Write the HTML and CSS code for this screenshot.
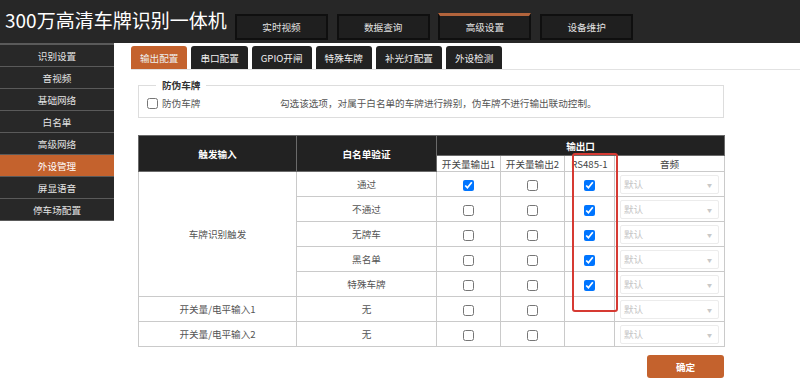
FILE: index.html
```html
<!DOCTYPE html>
<html lang="zh">
<head>
<meta charset="utf-8">
<title>300万高清车牌识别一体机</title>
<link rel="stylesheet" href="styles.css">
</head>
<body>
<header class="topbar">
  <div class="title">300万高清车牌识别一体机</div>
  <nav class="mainnav">
    <div class="navtab">实时视频</div>
    <div class="navtab">数据查询</div>
    <div class="navtab active">高级设置</div>
    <div class="navtab">设备维护</div>
  </nav>
</header>
<div class="layout">
  <aside class="sidebar">
    <div class="side-item">识别设置</div>
    <div class="side-item">音视频</div>
    <div class="side-item">基础网络</div>
    <div class="side-item">白名单</div>
    <div class="side-item">高级网络</div>
    <div class="side-item active">外设管理</div>
    <div class="side-item">屏显语音</div>
    <div class="side-item">停车场配置</div>
  </aside>
  <main class="main">
    <div class="subtabs">
      <div class="subtab active">输出配置</div>
      <div class="subtab">串口配置</div>
      <div class="subtab">GPIO开闸</div>
      <div class="subtab">特殊车牌</div>
      <div class="subtab">补光灯配置</div>
      <div class="subtab">外设检测</div>
    </div>
    <div class="panel">
      <fieldset class="guard">
        <legend>防伪车牌</legend>
        <div class="guard-row">
          <input type="checkbox" class="cb">
          <span class="lbl">防伪车牌</span>
          <span class="desc">勾选该选项，对属于白名单的车牌进行辨别，伪车牌不进行输出联动控制。</span>
        </div>
      </fieldset>
      <div class="tablewrap">
        <table class="grid">
          <colgroup>
            <col class="c-trig"><col class="c-white"><col class="c-out"><col class="c-out"><col class="c-rs"><col class="c-audio">
          </colgroup>
          <thead>
            <tr class="h1">
              <th class="dark" rowspan="2">触发输入</th>
              <th class="dark" rowspan="2">白名单验证</th>
              <th class="dark" colspan="4">输出口</th>
            </tr>
            <tr class="h2">
              <th>开关量输出1</th>
              <th>开关量输出2</th>
              <th>RS485-1</th>
              <th>音频</th>
            </tr>
          </thead>
          <tbody>
            <tr>
              <td rowspan="5">车牌识别触发</td>
              <td>通过</td>
              <td><input type="checkbox" class="cb" checked></td>
              <td><input type="checkbox" class="cb"></td>
              <td><input type="checkbox" class="cb" checked></td>
              <td><div class="sel"><span>默认</span><span class="arr">▼</span></div></td>
            </tr>
            <tr>
              <td>不通过</td>
              <td><input type="checkbox" class="cb"></td>
              <td><input type="checkbox" class="cb"></td>
              <td><input type="checkbox" class="cb" checked></td>
              <td><div class="sel"><span>默认</span><span class="arr">▼</span></div></td>
            </tr>
            <tr>
              <td>无牌车</td>
              <td><input type="checkbox" class="cb"></td>
              <td><input type="checkbox" class="cb"></td>
              <td><input type="checkbox" class="cb" checked></td>
              <td><div class="sel"><span>默认</span><span class="arr">▼</span></div></td>
            </tr>
            <tr>
              <td>黑名单</td>
              <td><input type="checkbox" class="cb"></td>
              <td><input type="checkbox" class="cb"></td>
              <td><input type="checkbox" class="cb" checked></td>
              <td><div class="sel"><span>默认</span><span class="arr">▼</span></div></td>
            </tr>
            <tr>
              <td>特殊车牌</td>
              <td><input type="checkbox" class="cb"></td>
              <td><input type="checkbox" class="cb"></td>
              <td><input type="checkbox" class="cb" checked></td>
              <td><div class="sel"><span>默认</span><span class="arr">▼</span></div></td>
            </tr>
            <tr>
              <td>开关量/电平输入1</td>
              <td>无</td>
              <td><input type="checkbox" class="cb"></td>
              <td><input type="checkbox" class="cb"></td>
              <td></td>
              <td><div class="sel"><span>默认</span><span class="arr">▼</span></div></td>
            </tr>
            <tr>
              <td>开关量/电平输入2</td>
              <td>无</td>
              <td><input type="checkbox" class="cb"></td>
              <td><input type="checkbox" class="cb"></td>
              <td></td>
              <td><div class="sel"><span>默认</span><span class="arr">▼</span></div></td>
            </tr>
          </tbody>
        </table>
        <div class="mark"></div>
      </div>
      <div class="actions">
        <button class="btn" type="button">确定</button>
      </div>
    </div>
  </main>
</div>
</body>
</html>
```

FILE: styles.css
```css
html, body {
  margin: 0;
  background: #fff;
}
body {
  font-family: "Noto Sans CJK SC", "Noto Sans", sans-serif;
  font-size: 9.6px;
  color: #444;
}

.topbar {
  display: flex;
  height: 43px;
  background: #272727;
}
.title {
  box-sizing: border-box;
  width: 235px;
  padding-left: 5px;
  font-size: 19px;
  line-height: 39px;
  color: #fff;
  white-space: nowrap;
}
.mainnav {
  display: flex;
  gap: 8.7px;
  padding-top: 14px;
}
.navtab {
  box-sizing: border-box;
  width: 93px;
  height: 26px;
  border: 2px solid #0f0f0f;
  background: #1f1f1f;
  color: #e2e2e2;
  display: flex;
  align-items: center;
  justify-content: center;
}
.navtab.active {
  border-top: 3px solid #b2643c;
  margin-top: -1px;
  height: 27px;
}

.layout {
  display: flex;
  align-items: flex-start;
}
.sidebar {
  width: 114px;
  flex: 0 0 114px;
  background: #282828;
  border-top: 2px solid #5a5a5a;
}
.side-item {
  height: 21px;
  border-bottom: 1px solid #5a5a5a;
  color: #e4e4e4;
  display: flex;
  align-items: center;
  justify-content: center;
}
.side-item.active {
  background: #c4622d;
  color: #fff;
}

.main {
  flex: 1;
  padding: 3px 0 0 17px;
}
.subtabs {
  display: flex;
  gap: 4px;
  border-bottom: 1px solid #e2e2e2;
}
.subtab {
  height: 23px;
  padding: 0 9px;
  background: #222;
  color: #eee;
  display: flex;
  align-items: center;
  border-radius: 3px 3px 0 0;
}
.subtab.active {
  background: #c4622d;
}

.panel {
  width: 586px;
  margin-left: 7px;
}
.guard {
  margin: 8px 0 0;
  padding: 4px 8px 7px;
  border: 1px solid #ddd;
  min-width: 0;
}
.guard legend {
  margin-left: 9px;
  padding: 0 6px;
  line-height: 14px;
  font-weight: bold;
  color: #333;
}
.guard-row {
  display: flex;
  align-items: center;
  line-height: 14px;
}
.cb {
  width: 11px;
  height: 11px;
  margin: 0;
  vertical-align: middle;
}
.guard-row .cb {
  margin-right: 4px;
}
.lbl {
  width: 118px;
  color: #555;
}
.desc {
  color: #555;
}

.tablewrap {
  position: relative;
  margin-top: 17px;
}
.grid {
  width: 586px;
  border-collapse: collapse;
  table-layout: fixed;
  text-align: center;
}
.c-trig { width: 158px; }
.c-white { width: 140px; }
.c-out { width: 64px; }
.c-rs { width: 50px; }
.c-audio { width: 110px; }
.grid th,
.grid td {
  border: 1px solid #cacaca;
  padding: 0;
  vertical-align: middle;
}
.grid .h1 th {
  height: 19px;
}
.grid th.dark {
  background: #222;
  color: #fff;
  font-weight: bold;
  border-color: #6a6a6a;
}
.grid .h2 th {
  height: 15px;
  background: #fff;
  color: #444;
  font-weight: normal;
  white-space: nowrap;
}
.grid tbody td {
  height: 24px;
  color: #555;
}
.sel {
  box-sizing: border-box;
  height: 19px;
  margin: 0 5px;
  padding: 0 6px 0 3px;
  border: 1px solid #ececec;
  border-radius: 2px;
  display: flex;
  align-items: center;
  justify-content: space-between;
  color: #c4c4c4;
}
.sel .arr {
  font-size: 5px;
  color: #c8c8c8;
}
.mark {
  position: absolute;
  left: 434px;
  top: 18px;
  width: 46px;
  height: 159px;
  box-sizing: border-box;
  border: 2px solid #d63a33;
  border-radius: 3px;
  pointer-events: none;
}

.actions {
  display: flex;
  justify-content: flex-end;
  margin-top: 8px;
}
.btn {
  width: 77px;
  height: 23px;
  border: 0;
  border-radius: 3px;
  background: #c4622d;
  color: #fff;
  font-family: "Noto Sans CJK SC", "Noto Sans", sans-serif;
  font-size: 9.6px;
  font-weight: bold;
}
```
